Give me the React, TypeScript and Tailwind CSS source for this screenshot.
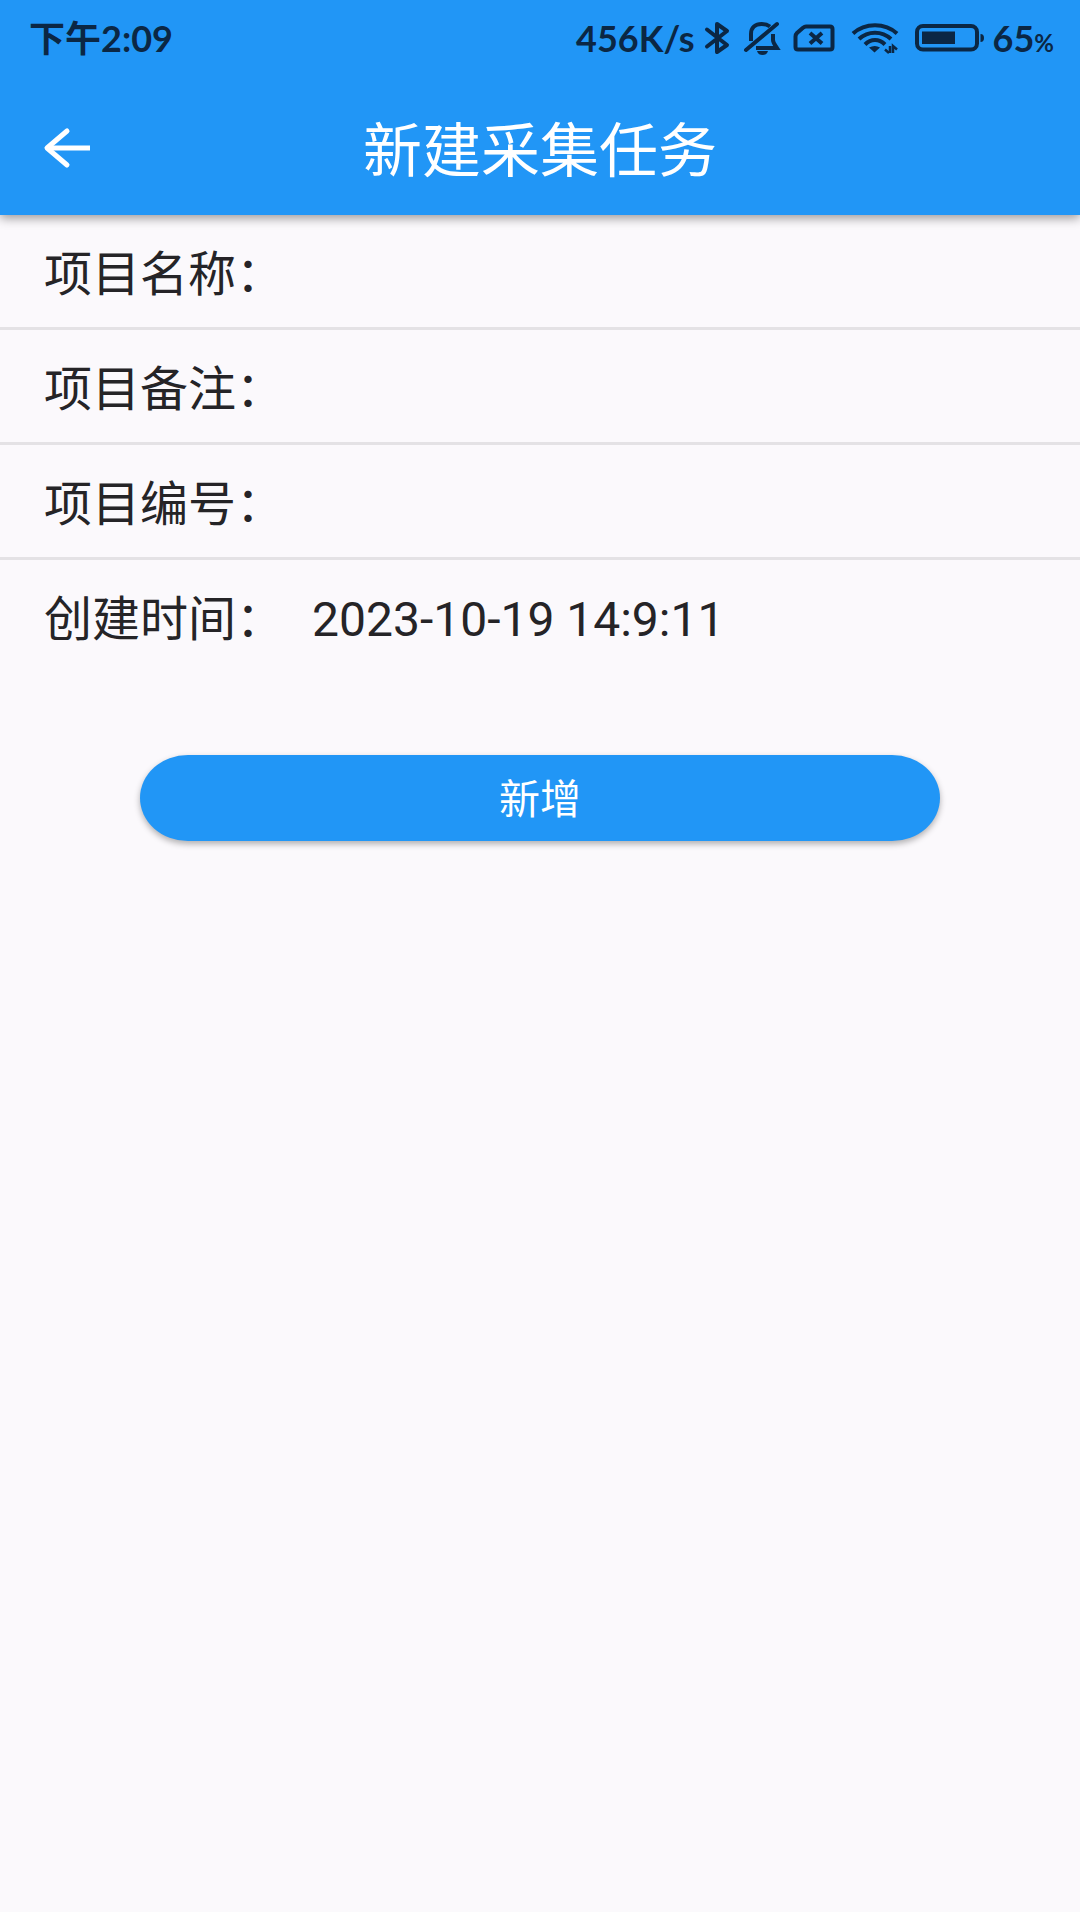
import React from 'react';

function BluetoothIcon() {
  return (
    <svg width="28" height="36" viewBox="0 0 28 36" fill="none" stroke="currentColor" strokeWidth="4" strokeLinejoin="round" strokeLinecap="round" aria-hidden="true">
      <path d="M4 9.5 L24 25 L14 32 V4 L24 11 L4 26.5" />
    </svg>
  );
}

function MutedBellIcon() {
  return (
    <svg width="38" height="36" viewBox="0 0 38 36" fill="none" stroke="currentColor" strokeWidth="4" aria-hidden="true">
      <path d="M8 21 V14 C8 7.500 12.500 4 18.500 4 C22.500 4 25 5 27 6.500" />
      <path d="M34 4 L3 30" strokeLinecap="round" />
      <path d="M30 14 V20 C30 23 32 25 34 28 H13" />
      <path d="M14 31 H25 C24 34 22 35 19.500 35 C17 35 15 34 14 31 Z" fill="currentColor" stroke="none" />
    </svg>
  );
}

function NoSimIcon() {
  return (
    <svg width="42" height="28" viewBox="0 0 42 28" fill="none" stroke="currentColor" strokeWidth="4" aria-hidden="true">
      <path d="M13 2.500 H37 Q39.500 2.500 39.500 5 V23 Q39.500 25.500 37 25.500 H5 Q2.500 25.500 2.500 23 V12.500 Q2.500 10.500 4 9 L10 3.700 Q11.500 2.500 13 2.500 Z" />
      <path d="M17 9 L29 19.500 M29 9 L17 19.500" />
    </svg>
  );
}

function WifiIcon() {
  return (
    <svg width="48" height="32" viewBox="0 0 48 32" fill="none" stroke="currentColor" strokeWidth="4" aria-hidden="true">
      <path d="M2 11.500 C14 0.500 34 0.500 46 11.500" />
      <path d="M8 17 C17 8.500 31 8.500 40 17" />
      <path d="M14 22.500 C20 16.500 28 16.500 34 22.500" />
      <path d="M18 25.500 Q24 22.500 29 25.500 L23.500 30.500 Z" fill="currentColor" stroke="none" />
      <path d="M39 24 V31 M34 27.500 L38 31 M42 31 V24 L46 27.500" strokeWidth="2.500" />
    </svg>
  );
}

function BatteryIcon() {
  return (
    <svg width="70" height="28" viewBox="0 0 70 28" fill="none" aria-hidden="true">
      <rect x="2" y="2" width="60" height="23.500" rx="6" stroke="currentColor" strokeWidth="4" />
      <rect x="7" y="7.500" width="33" height="12.500" fill="currentColor" />
      <path d="M65.500 10 Q69 10 69 14 Q69 18 65.500 18 Z" fill="currentColor" />
    </svg>
  );
}

function StatusBar() {
  return (
    <div className="flex h-[76px] items-center justify-between pl-[29px] pr-[26px] text-[36px] leading-none font-bold text-[#0b2744]">
      <span>下午2:09</span>
      <div className="flex items-center">
        <span>456K/s</span>
        <span className="ml-2"><BluetoothIcon /></span>
        <span className="ml-3"><MutedBellIcon /></span>
        <span className="ml-3"><NoSimIcon /></span>
        <span className="ml-4"><WifiIcon /></span>
        <span className="ml-4"><BatteryIcon /></span>
        <span className="ml-2 flex items-baseline">
          65<span className="text-[24px]">%</span>
        </span>
      </div>
    </div>
  );
}

function TopBar() {
  return (
    <div className="grid h-[139px] grid-cols-[1fr_auto_1fr] items-center px-10 pt-1">
      <button type="button" aria-label="返回" className="justify-self-start text-white">
        <svg width="54" height="44" viewBox="0 0 54 44" fill="none" stroke="currentColor" strokeWidth="5" aria-hidden="true">
          <path d="M27 5 L7 22 L27 39" strokeLinecap="round" strokeLinejoin="round" />
          <path d="M7 22 H50" />
        </svg>
      </button>
      <h1 className="pt-1 text-[59px] leading-[72px] font-normal text-white">新建采集任务</h1>
    </div>
  );
}

const fields = [
  { id: 'name', label: '项目名称：' },
  { id: 'remark', label: '项目备注：' },
  { id: 'number', label: '项目编号：' },
];

export default function App() {
  return (
    <div className="min-h-screen bg-white pb-2 font-['Lato','Noto_Sans_CJK_SC',sans-serif]">
      <div className="min-h-[calc(100vh-8px)] bg-[#fbf9fc]">
        <header className="relative bg-[#2196f6] shadow-[0_3px_10px_rgba(0,0,0,0.4)]">
          <StatusBar />
          <TopBar />
        </header>
        <form
          className="font-['Roboto','Noto_Sans_CJK_SC',sans-serif] text-[#252427]"
          onSubmit={(e) => e.preventDefault()}
        >
          {fields.map((f) => (
            <div key={f.id} className="flex h-[115px] items-center border-b-3 border-[#e4e2e5] px-11 pt-2">
              <label htmlFor={f.id} className="shrink-0 text-[48px] leading-[60px]">{f.label}</label>
              <input id={f.id} type="text" className="ml-7 min-w-0 flex-1 bg-transparent text-[48px] leading-[60px] outline-none" />
            </div>
          ))}
          <div className="flex h-[115px] items-center px-11 pt-1">
            <span className="shrink-0 text-[48px] leading-[60px]">创建时间：</span>
            <time dateTime="2023-10-19T14:09:11" className="ml-7 text-[48px] leading-[60px]">2023-10-19 14:9:11</time>
          </div>
          <div className="px-[13%] pt-20">
            <button
              type="submit"
              className="h-[86px] w-full rounded-[6%/50%] bg-[#2196f6] pt-1 text-[41px] leading-[60px] text-white shadow-[0_3px_6px_rgba(0,0,0,0.3)]"
            >
              新增
            </button>
          </div>
        </form>
      </div>
    </div>
  );
}
